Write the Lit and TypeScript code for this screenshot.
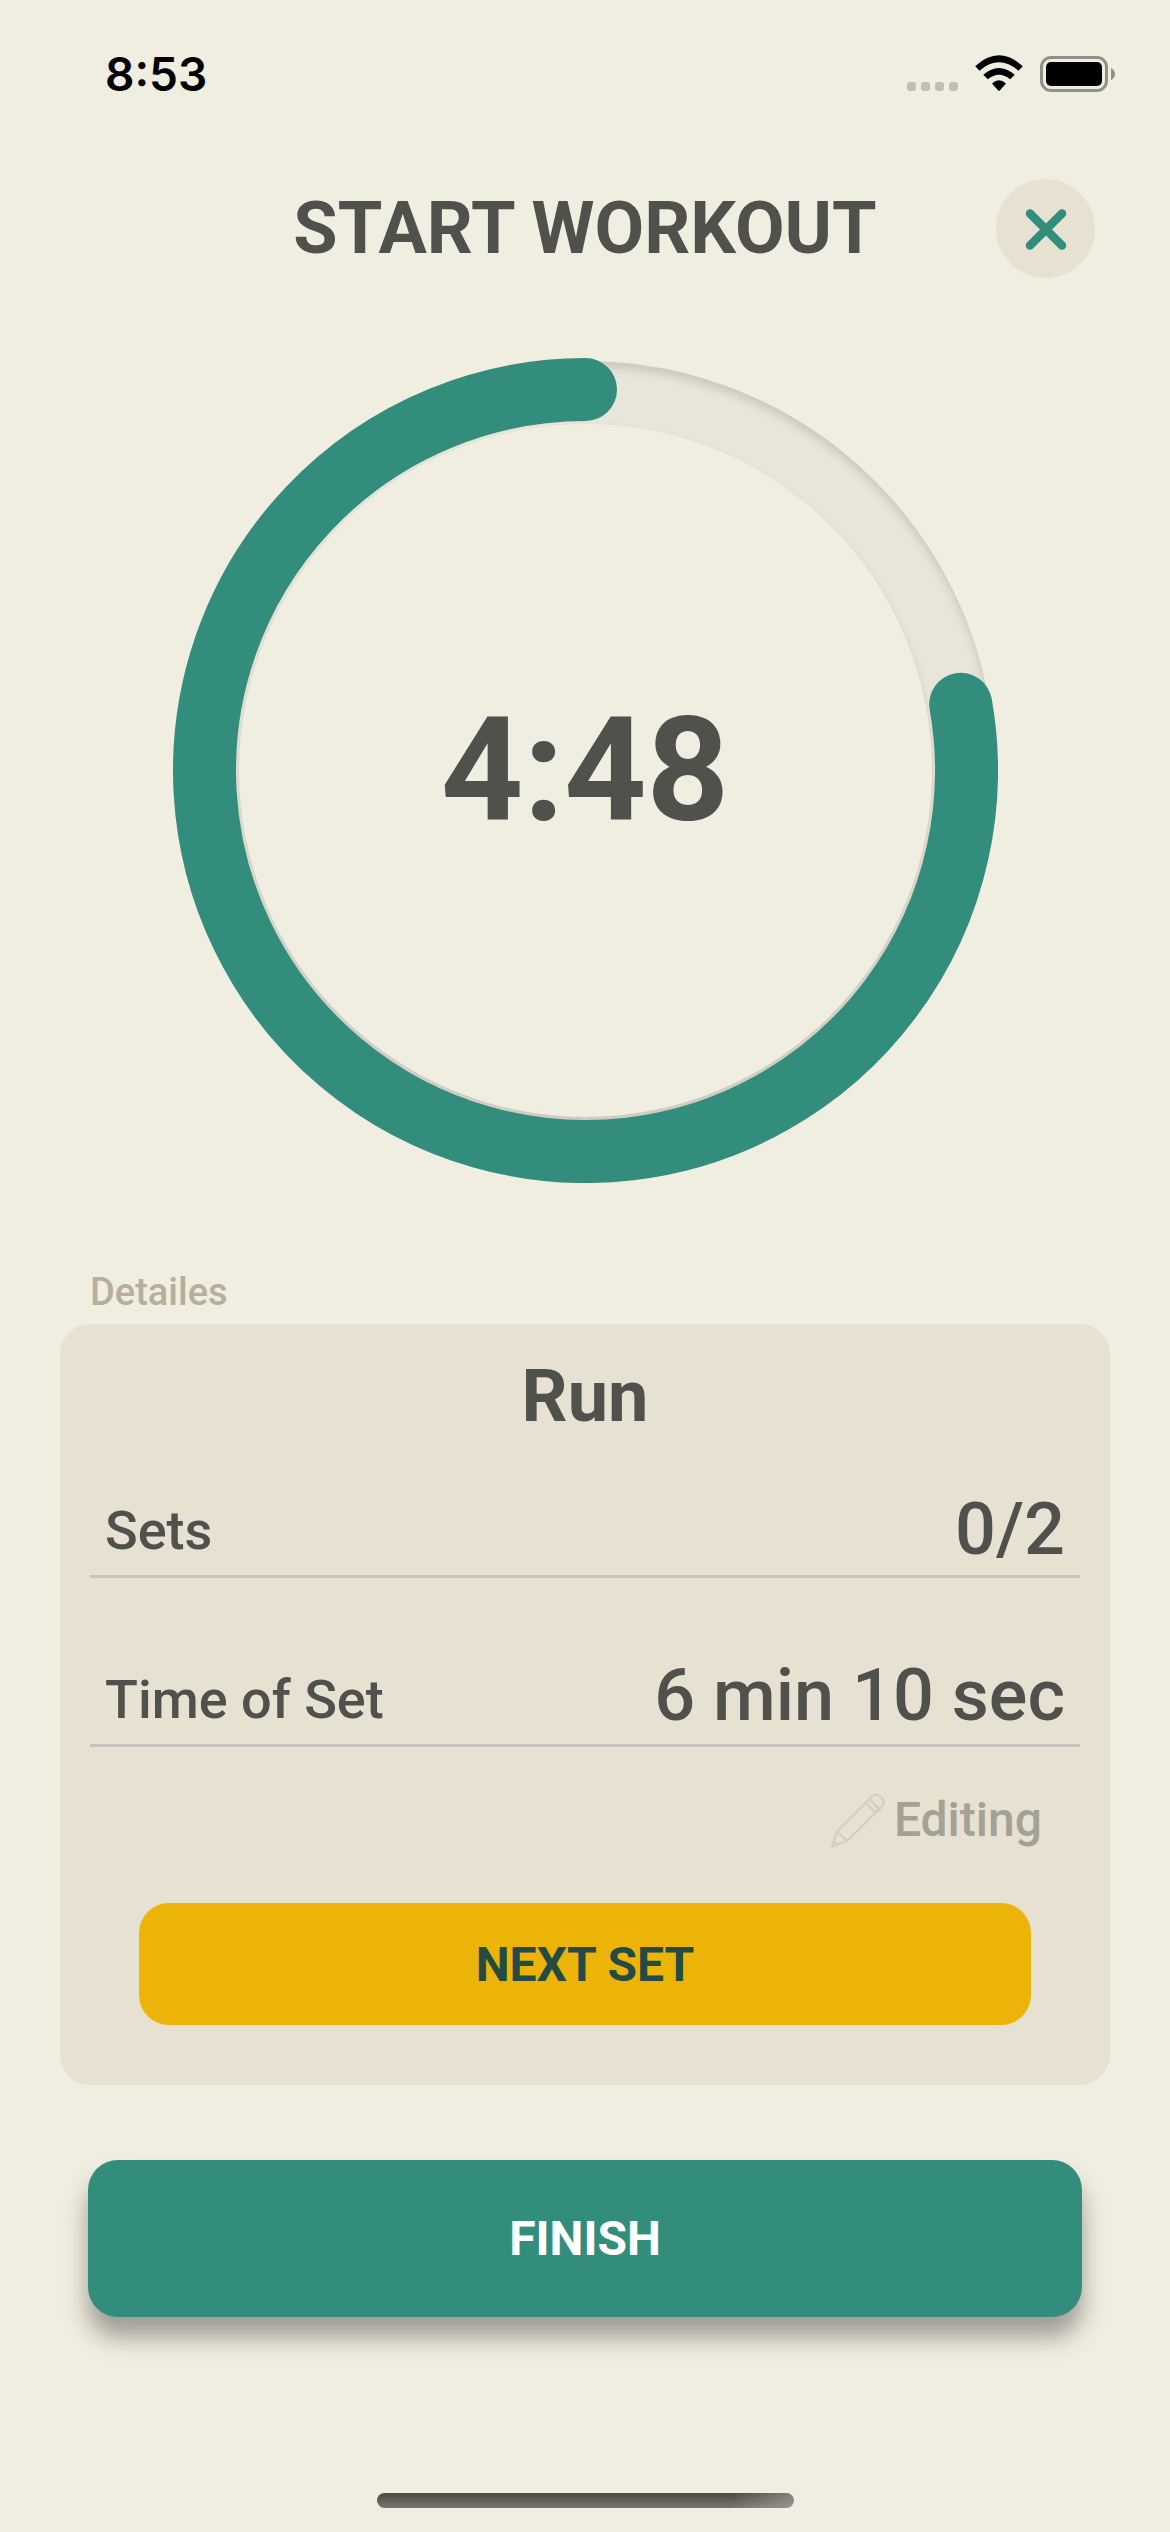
import { LitElement, html, svg, css } from "lit";
import { customElement, property } from "lit/decorators.js";

@customElement("status-bar")
class StatusBar extends LitElement {
  static styles = css`
    :host { display: block; }
    .bar { height: 179px; box-sizing: border-box; padding: 44px 55px 0 105px; display: flex; justify-content: space-between; align-items: flex-start; }
    .time { font: 600 46px/60px Inter, sans-serif; color: #000; letter-spacing: 0; }
    svg { display: block; margin-top: 8px; }
  `;
  render() {
    return html`<div class="bar">
      <span class="time">8:53</span>
      <svg width="208" height="44" viewBox="907 52 208 44">
        ${[907, 921, 935, 949].map((x) => svg`<rect x=${x} y="82" width="9" height="9" rx="3" fill="#c1bfb5"/>`)}
        <path d="M975.2 66.2Q999 44.500 1022.800 66.200L1018.400 70.700Q999 54 979.600 70.700Z" fill="#000"/>
        <path d="M983.300 74.800Q999 61.200 1014.700 74.800L1010.200 79.300Q999 70.200 987.800 79.300Z" fill="#000"/>
        <path d="M992 83.600Q999 77 1006 83.600L999.800 90.400Q999 91.200 998.200 90.400Z" fill="#000"/>
        <rect x="1041.500" y="57.500" width="65" height="33" rx="9.500" fill="none" stroke="#918f88" stroke-width="3"/>
        <rect x="1046" y="62" width="56" height="24" rx="5" fill="#000"/>
        <path d="M1111 68Q1115 70 1115 74T1111 80Z" fill="#918f88"/>
      </svg>
    </div>`;
  }
}

@customElement("timer-ring")
class TimerRing extends LitElement {
  @property() label = "";
  @property({ type: Number }) elapsed = 0;
  static styles = css`
    :host { display: block; }
    .ring { display: grid; place-items: center; width: 825px; height: 825px; margin: 0 auto; }
    .ring > * { grid-area: 1 / 1; }
    .dial { display: block; }
    .label { font-size: 144px; line-height: 170px; font-weight: 700; color: #50504d; }
  `;
  render() {
    const c = 412.5;
    const r = 381;
    const a = (this.elapsed * Math.PI) / 180;
    const x = c + r * Math.sin(a);
    const y = c - r * Math.cos(a);
    const circle = (q: number) => `M${c - q} ${c}a${q} ${q} 0 1 0 ${2 * q} 0a${q} ${q} 0 1 0 ${-2 * q} 0Z`;
    return html`<div class="ring">
      <svg class="dial" width="825" height="825" viewBox="0 0 825 825">
        <defs>
          <clipPath id="band"><path clip-rule="evenodd" d="${circle(409.5)}${circle(346.5)}"/></clipPath>
          <filter id="soft" x="-10%" y="-10%" width="120%" height="120%"><feGaussianBlur stdDeviation="5"/></filter>
        </defs>
        <g clip-path="url(#band)">
          <rect width="825" height="825" fill="#e8e5da"/>
          <path filter="url(#soft)" transform="translate(0 6)" fill="#000" fill-opacity=".13" fill-rule="evenodd"
            d="M-60-60H885V885H-60Z${circle(409.5)}${circle(346.5)}"/>
        </g>
        <path d="M${x} ${y}A${r} ${r} 0 1 1 ${c} ${c - r}" fill="none" stroke="#338d7c" stroke-width="63" stroke-linecap="round"/>
      </svg>
      <span class="label">${this.label}</span>
    </div>`;
  }
}

@customElement("app-root")
class AppRoot extends LitElement {
  static styles = css`
    :host { display: block; width: 1170px; height: 2532px; overflow: hidden; background: #f0eee1; color: #50504d; font-family: Roboto, sans-serif; }
    .header { display: grid; grid-template-columns: 99px 1fr 99px; align-items: center; padding: 0 75px; height: 99px; }
    .title { grid-column: 2; margin: 0; text-align: center; font-size: 72px; line-height: 84px; font-weight: 700; white-space: nowrap; }
    .close { display: grid; place-items: center; width: 99px; height: 99px; border: 0; padding: 0; border-radius: 50%; background: #e7e1d1; }
    .timer { margin-top: 80px; }
    .caption { height: 64px; margin-top: 77px; padding-left: 90px; font-size: 38px; line-height: 65px; font-weight: 500; color: #b5af9b; }
    .card { box-sizing: border-box; height: 761px; margin: 0 60px; padding: 30px 30px 60px; border-radius: 30px; background: #e7e1d1; display: flex; flex-direction: column; }
    .name { margin: 0; text-align: center; font-size: 72px; line-height: 86px; height: 84px; font-weight: 700; }
    .row { display: flex; justify-content: space-between; align-items: center; height: 91px; margin-top: 46px; padding: 0 15px; border-bottom: 3px solid #c4c4c4; font-weight: 500; }
    .row + .row { margin-top: 75px; }
    .key { padding-top: 2px; font-size: 54px; line-height: 64px; }
    .value { font-size: 72px; line-height: 84px; }
    .row + .row .value { padding-bottom: 6px; }
    .edit { display: flex; justify-content: flex-end; align-items: center; gap: 9px; height: 54px; margin-top: 46px; padding-right: 38px; font-size: 48px; line-height: 56px; font-weight: 500; color: #a4a196; }
    .button { border: 0; padding: 0; border-radius: 30px; font: 700 48px/56px Roboto, sans-serif; }
    .next { height: 122px; margin: 56px 49px 0; padding-top: 1px; background: #ecb408; color: #234b43; }
    .finish { display: block; width: 994px; height: 157px; margin: 75px auto 0; background: #338d7c; color: #fff; box-shadow: 0 20px 24px rgba(0, 0, 0, 0.34); }
    .home { width: 417px; height: 15px; margin: 176px auto 0; border-radius: 7.5px; background: linear-gradient(100deg, transparent 85%, rgba(185, 183, 175, 0.5)), linear-gradient(#4b4a43, #78766d); }
  `;
  render() {
    return html`
      <status-bar></status-bar>
      <header class="header">
        <h1 class="title">START WORKOUT</h1>
        <button class="close" aria-label="Close">
          <svg width="42" height="42" viewBox="0 0 42 42"><path d="M5 5.500L37 37.500M37 5.500L5 37.500" stroke="#338d7c" stroke-width="8.500" stroke-linecap="round"/></svg>
        </button>
      </header>
      <timer-ring class="timer" label="4:48" elapsed="80"></timer-ring>
      <div class="caption">Detailes</div>
      <section class="card">
        <h2 class="name">Run</h2>
        <div class="row"><span class="key">Sets</span><span class="value">0/2</span></div>
        <div class="row"><span class="key">Time of Set</span><span class="value">6 min 10 sec</span></div>
        <div class="edit">
          <svg width="55" height="55" viewBox="0 0 55 55" fill="none" stroke="#d2cfc0" stroke-width="2.300" stroke-linejoin="round">
            <path d="M2 53.500L7 38.500L41 4.500Q46-1 51 4.500Q56.500 9 51 14.500L17 48Z"/>
            <path d="M7 38.500L17 48M36 10L45.500 19.500M40 6.500L49 16M3.500 49.500Q6.500 49.500 6.500 52"/>
          </svg>
          <span>Editing</span>
        </div>
        <button class="button next">NEXT SET</button>
      </section>
      <button class="button finish">FINISH</button>
      <div class="home"></div>
    `;
  }
}
